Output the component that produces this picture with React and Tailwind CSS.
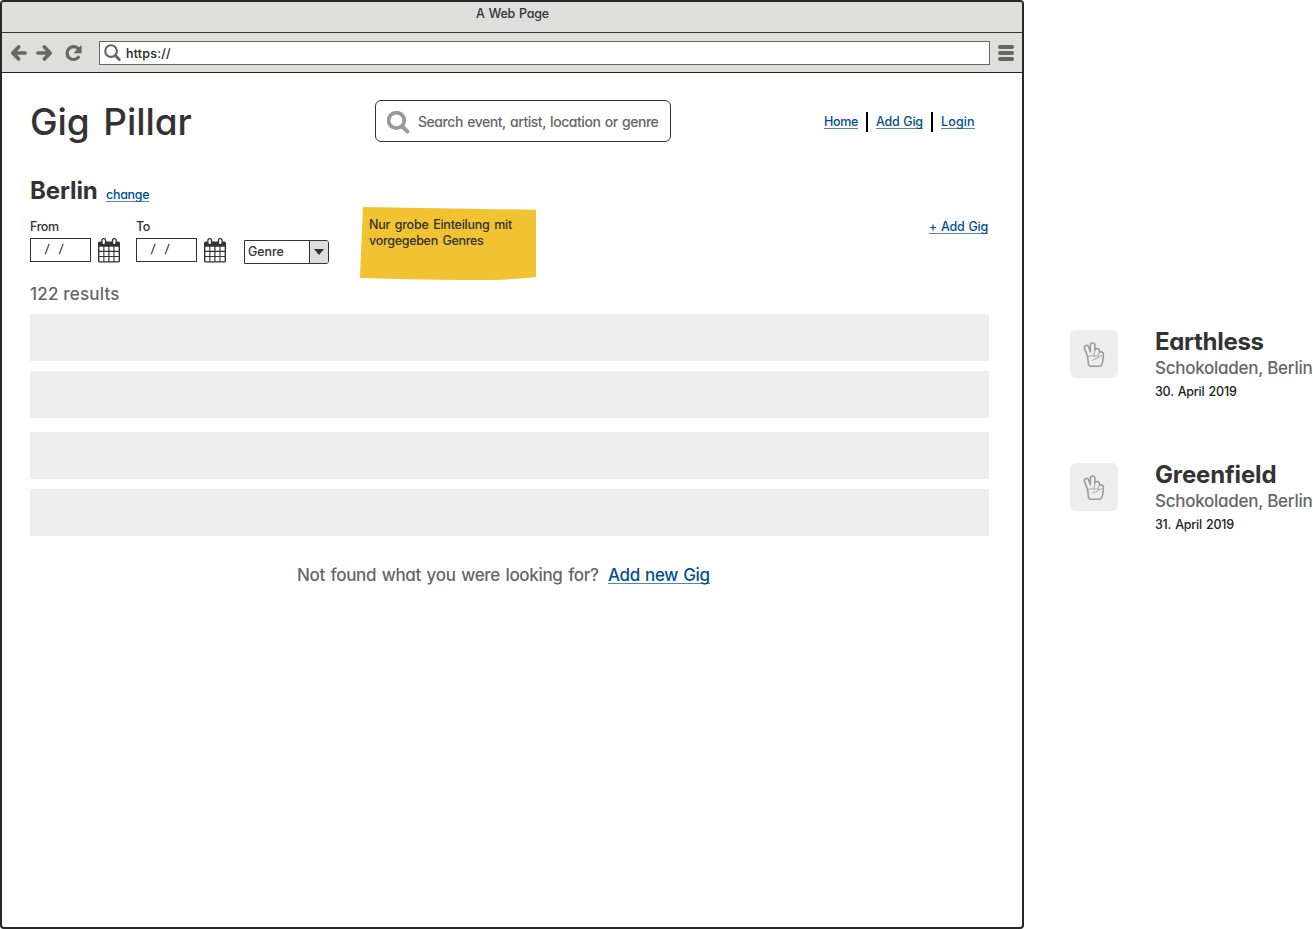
function ArrowIcon({ className = "" }) {
  return (
    <svg viewBox="0 0 17 18" className={`h-[18px] w-[17px] ${className}`} fill="none" stroke="currentColor" strokeWidth="3.7" strokeLinecap="round" strokeLinejoin="round">
      <path d="M8.6 3 2.8 9l5.8 6M3.4 9H15" />
    </svg>
  );
}

function ReloadIcon() {
  return (
    <svg viewBox="0 0 18 18" className="h-[18px] w-[18px]">
      <path d="M13.4 13.2a6.4 6.4 0 1 1-.4-8.6" fill="none" stroke="currentColor" strokeWidth="3.2" strokeLinecap="round" />
      <path d="M15.7 1.6q.9-.4.9.5v6.4q0 .7-.7.7H9.5q-1 0-.3-.8z" fill="currentColor" />
    </svg>
  );
}

function SearchIcon({ className, ring, handle }) {
  return (
    <svg viewBox="0 0 24 24" className={className} fill="none" stroke="currentColor" strokeLinecap="round">
      <circle cx="9.4" cy="9.4" r="7.8" strokeWidth={ring} />
      <path d="m15.4 15.6 5 5" strokeWidth={handle} />
    </svg>
  );
}

function CalendarIcon() {
  return (
    <svg viewBox="0 0 22 25" className="h-[25px] w-[22px]">
      <rect x="0" y="3.6" width="22" height="21" rx="1.5" fill="#333" />
      <path d="M1.4 8.8h3.9v4H1.4zM6.4 8.8h3.9v4H6.4zM11.5 8.8h3.9v4h-3.9zM16.5 8.8h4.1v4h-4.1zM1.4 13.9h3.9v4H1.4zM6.4 13.9h3.9v4H6.4zM11.5 13.9h3.9v4h-3.9zM16.5 13.9h4.1v4h-4.1zM1.4 19h3.9v4.2H1.4zM6.4 19h3.9v4.2H6.4zM11.5 19h3.9v4.2h-3.9zM16.5 19h4.1v4.2h-4.1z" fill="#fff" />
      <rect x="3.9" y=".7" width="3.6" height="6" rx="1.6" fill="#fff" stroke="#333" strokeWidth="1.3" />
      <rect x="14.5" y=".7" width="3.6" height="6" rx="1.6" fill="#fff" stroke="#333" strokeWidth="1.3" />
    </svg>
  );
}

function PeaceHandIcon() {
  return (
    <svg viewBox="0 0 22 26" className="mt-px h-[26px] w-[22px]" fill="none" stroke="#9c9c9c" strokeLinecap="round" strokeLinejoin="round">
      <path d="M4.6 14.6 1.5 6.4C.5 3.4 4.3 2 5.5 4.8l1.9 5L7.3 3.4C7.3.2 11.8.2 11.9 3.2v4.6c.9-1.8 4.6-1.7 4.7 1.4v1c2-.9 4 .2 3.8 2.2l-.4 5.4q-.1 2-1 3.8c-.4 1.6-.8 2.6-2.6 2.6H8.2c-2 0-2.7-.9-2.8-2.4z" strokeWidth="1.6" />
      <path d="M4.8 14.9q2.6-1.8 5.1-.9h3.8q1.7.3 1.5 1.6-.3 1.1-2.2 1.1-2.4-.1-3.6 1.8M12 8.2l-1 5.2M16.6 10l-1.6 4q2.7 2 3.8-.6" strokeWidth=".9" />
    </svg>
  );
}

function Link({ children, className = "" }) {
  return (
    <a href="#" className={`block whitespace-nowrap border-b border-[#4f86b8] text-[12.5px] leading-[13px] text-[#004f92] ${className}`}>
      {children}
    </a>
  );
}

function DateField({ label }) {
  return (
    <div className="w-[106px]">
      <div className="h-[22px] text-[12.5px] leading-[22px] tracking-[-0.4px]">{label}</div>
      <div className="flex gap-[7px]">
        <div className="h-6 w-[61px] border border-[#333] pl-[14px] text-[12px] leading-[20px]">
          <span className="mr-[10px] inline-block -skew-x-6">/</span>
          <span className="inline-block -skew-x-6">/</span>
        </div>
        <CalendarIcon />
      </div>
    </div>
  );
}

function BrowserChrome() {
  return (
    <div className="h-[71px] border-b border-[#222] bg-[#dededc]">
      <div className="h-[31px] border-b border-[#333] pl-px text-center text-[12.5px] leading-[24px] tracking-[-0.25px] [word-spacing:1px]">A Web Page</div>
      <div className="flex h-[39px] items-center pl-2 text-[#666]">
        <ArrowIcon />
        <ArrowIcon className="ml-[9px] -scale-x-100" />
        <div className="ml-[12px]"><ReloadIcon /></div>
        <div className="ml-[16px] flex h-6 w-[891px] items-center border border-[#666] bg-white pl-[4px]">
          <SearchIcon className="h-[18px] w-[18px]" ring="2.8" handle="3.8" />
          <span className="ml-1 pt-[2px] text-[12.5px] leading-[22px] tracking-[0.2px] text-[#222]">https://</span>
        </div>
        <div className="ml-2 flex flex-col gap-[2px]">
          <div className="h-1 w-4 rounded-full bg-[#666]" />
          <div className="h-1 w-4 rounded-full bg-[#666]" />
          <div className="h-1 w-4 rounded-full bg-[#666]" />
        </div>
      </div>
    </div>
  );
}

function StickyNote() {
  return (
    <div className="absolute left-[330px] top-[-9px] h-[74px] w-[176px]">
      <svg viewBox="0 0 176 74" className="absolute inset-0 h-full w-full">
        <path d="M3 0 176 2.8V70Q150 73.4 100 73 50 72.6 0 71z" fill="#f1c232" />
      </svg>
      <div className="relative pl-[9px] pt-[10px] text-[12.5px] leading-4 text-[#333] [word-spacing:1.5px]">
        <div className="whitespace-nowrap tracking-[-0.23px]">Nur grobe Einteilung mit</div>
        <div className="whitespace-nowrap tracking-[-0.3px]">vorgegeben Genres</div>
      </div>
    </div>
  );
}

function GigItem({ name, nameClass, date }) {
  return (
    <div className="flex h-[133px] gap-[37px]">
      <div className="flex h-12 w-12 shrink-0 items-center justify-center rounded-md bg-[#eee]">
        <PeaceHandIcon />
      </div>
      <div className="whitespace-nowrap">
        <div className={`h-6 text-[24px] font-bold leading-6 ${nameClass}`}>{name}</div>
        <div className="h-7 text-[17px] leading-7 tracking-[-0.27px] text-[#666]">Schokoladen, Berlin</div>
        <div className="h-5 text-[12.5px] leading-5 tracking-[-0.22px] text-[#222] [word-spacing:1px]">{date}</div>
      </div>
    </div>
  );
}

export default function App() {
  return (
    <div className="flex h-[929px] w-[1313px] overflow-hidden bg-white font-['Inter',sans-serif] text-[#333] [font-feature-settings:'cv11'] [font-weight:450]">
      <div className="h-[929px] w-[1024px] shrink-0 overflow-hidden rounded border-2 border-[#262626]">
        <BrowserChrome />
        <main className="pl-7 pr-[33px] pt-[27px]">
          <header className="flex h-[42px] items-center">
            <h1 className="w-[345px] whitespace-nowrap pt-[2px] text-[37px] font-medium leading-[42px] tracking-[-0.1px] [word-spacing:4px]">Gig Pillar</h1>
            <div className="flex h-[42px] w-[296px] items-center rounded-md border border-[#333] pl-[11px]">
              <SearchIcon className="mt-[3px] h-6 w-6 text-[#999]" ring="3.7" handle="4" />
              <span className="ml-[7px] mt-px whitespace-nowrap text-[14px] tracking-[-0.45px] text-[#666] [word-spacing:1px]">Search event, artist, location or genre</span>
            </div>
            <nav className="ml-[153px] flex items-center gap-2 pt-[2px]">
              <Link className="w-[34px] tracking-[-0.3px]">Home</Link>
              <div className="h-5 w-[2px] bg-black" />
              <Link className="w-[47px] tracking-[-0.3px] [word-spacing:1px]">Add Gig</Link>
              <div className="h-5 w-[2px] bg-black" />
              <Link className="w-[34px] tracking-[0.15px]">Login</Link>
            </nav>
          </header>
          <div className="mt-[35px] flex h-7 items-baseline gap-2">
            <h2 className="w-[68px] text-[24px] font-bold leading-7 tracking-[-0.1px]">Berlin</h2>
            <Link className="tracking-[-0.3px]">change</Link>
          </div>
          <section className="relative mt-[11px] flex h-[66px] items-start">
            <DateField label="From" />
            <DateField label="To" />
            <div className="ml-[2px] mt-6 flex h-6 w-[85px] rounded-r-[3px] border border-[#333]">
              <div className="grow pl-[3px] text-[12.5px] leading-[22px] tracking-[-0.1px]">Genre</div>
              <div className="flex w-[19px] items-center justify-center rounded-r-[2px] border-l border-[#333] bg-[#ddd]">
                <svg viewBox="0 0 10 6" className="h-[6px] w-[10px]"><path d="M0 0h10L5 6z" fill="#333" /></svg>
              </div>
            </div>
            <StickyNote />
            <Link className="ml-auto mr-px mt-1 tracking-[-0.25px] [word-spacing:1px]">+ Add Gig</Link>
          </section>
          <p className="h-6 text-[17px] leading-[24px] tracking-[0.2px] text-[#666]">122 results</p>
          <div className="mt-2 flex flex-col gap-[10px]">
            <div className="h-[47px] bg-[#eee]" />
            <div className="h-[47px] bg-[#eee]" />
          </div>
          <div className="mt-[14px] flex flex-col gap-[10px]">
            <div className="h-[47px] bg-[#eee]" />
            <div className="h-[47px] bg-[#eee]" />
          </div>
          <div className="mt-[30px] flex items-start pl-[267px]">
            <span className="w-[301px] whitespace-nowrap text-[17px] leading-[18px] tracking-[-0.33px] text-[#666] [word-spacing:1.4px]">Not found what you were looking for?</span>
            <a href="#" className="ml-[10px] h-[18px] whitespace-nowrap border-b border-[#4f86b8] pt-px text-[17px] font-medium leading-[17px] tracking-[-0.35px] text-[#004f92] [word-spacing:1px]">Add new Gig</a>
          </div>
        </main>
      </div>
      <aside className="pl-[46px] pt-[330px]">
        <GigItem name="Earthless" nameClass="tracking-[-0.3px]" date="30. April 2019" />
        <GigItem name="Greenfield" nameClass="tracking-[-0.15px]" date="31. April 2019" />
      </aside>
    </div>
  );
}
